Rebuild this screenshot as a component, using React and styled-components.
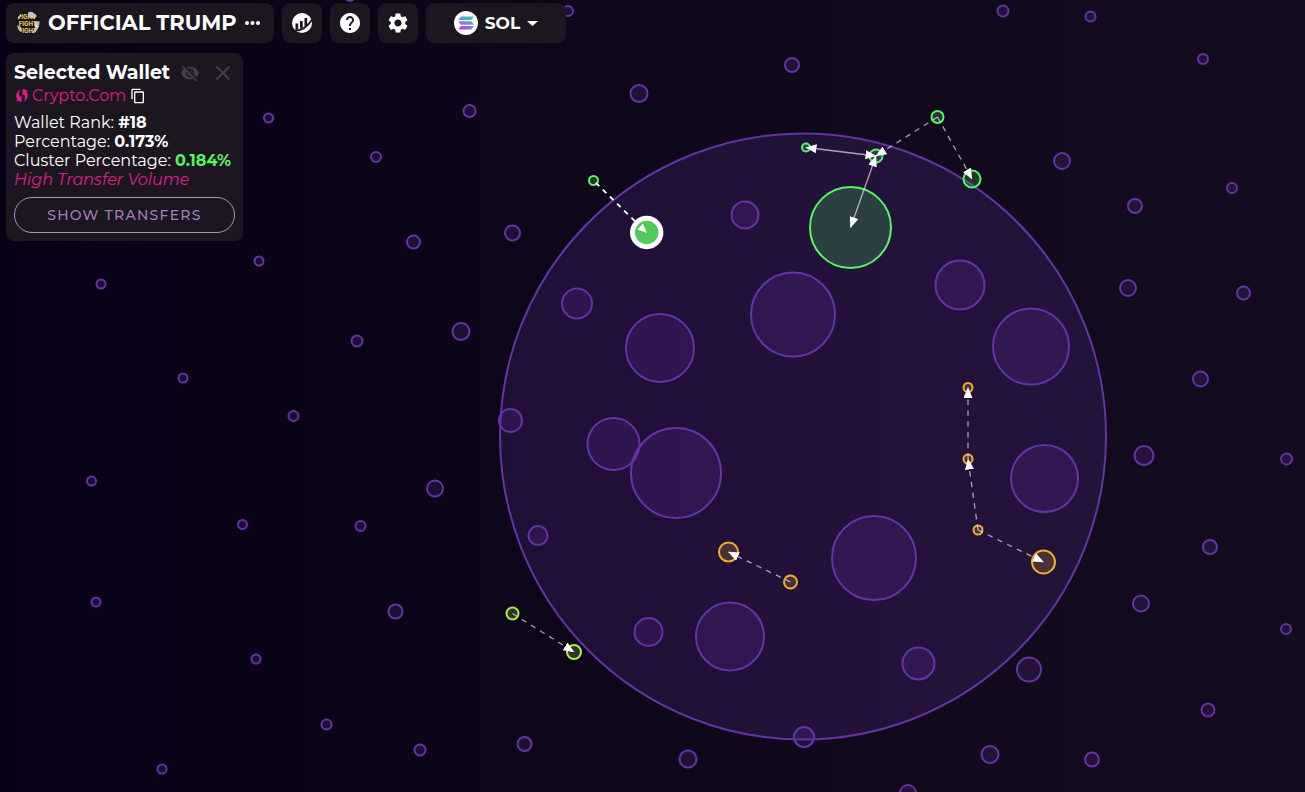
import React from "react";
import styled, { createGlobalStyle } from "styled-components";

const GlobalStyle = createGlobalStyle`
  * { box-sizing: border-box; }
  body {
    margin: 0;
    background: linear-gradient(90deg, #080014 0%, #120a1c 70%, #140b1f 100%);
    color: #fff;
    font-family: Montserrat, Inter, "Open Sans", sans-serif;
    overflow: hidden;
  }
`;

const Page = styled.div`
  position: relative;
  min-height: 100vh;
`;

const BubbleMap = styled.svg`
  position: absolute;
  inset: 0;
  width: 100%;
  height: 100%;
`;

const Overlay = styled.main`
  position: relative;
  display: flex;
  flex-direction: column;
  align-items: flex-start;
  gap: 10px;
  padding: 3px 6px;
`;

const Toolbar = styled.header`
  display: flex;
  gap: 8px;
`;

const ToolButton = styled.button`
  display: flex;
  align-items: center;
  justify-content: ${(p) => (p.$start ? "flex-start" : "center")};
  gap: ${(p) => p.$gap || 0}px;
  height: 40px;
  min-width: ${(p) => p.$width || 40}px;
  padding: 0 ${(p) => (p.$start ? 10 : 0)}px;
  border: 0;
  border-radius: 8px;
  background: #1b161f;
  color: #fff;
  font: inherit;
  cursor: pointer;
`;

const TokenName = styled.span`
  font-size: 21px;
  line-height: 28px;
  font-weight: 700;
`;

const ChainName = styled.span`
  font-size: 17px;
  line-height: 24px;
  font-weight: 700;
`;

const Panel = styled.section`
  width: 237px;
  padding: 8px;
  border-radius: 8px;
  background: #1b161f;
`;

const PanelHead = styled.div`
  display: flex;
  align-items: center;
  gap: 8px;
  height: 24px;
`;

const Title = styled.h1`
  margin: 0;
  font-size: 19px;
  line-height: 24px;
  font-weight: 700;
  white-space: nowrap;
`;

const IconButton = styled.button`
  display: flex;
  align-items: center;
  justify-content: center;
  height: 24px;
  width: 24px;
  margin-left: ${(p) => (p.$end ? "auto" : "0")};
  padding: 0;
  border: 0;
  background: none;
  color: ${(p) => p.$color || "#4a3a50"};
  cursor: pointer;
`;

const WalletRow = styled.div`
  display: flex;
  align-items: center;
  height: 22px;
  margin-bottom: 6px;
`;

const WalletLink = styled.a`
  display: flex;
  align-items: center;
  gap: 2px;
  color: #e01e8c;
  font-size: 16px;
  line-height: 20px;
  text-decoration: none;
`;

const Stat = styled.p`
  margin: 0;
  font-size: 16px;
  line-height: 19px;
  white-space: nowrap;
  color: ${(p) => p.$color || "#fff"};
  font-style: ${(p) => (p.$italic ? "italic" : "normal")};
`;

const Value = styled.strong`
  font-weight: 700;
  color: ${(p) => p.$color || "inherit"};
`;

const TransfersButton = styled.button`
  width: 100%;
  height: 36px;
  margin-top: 8px;
  border: 1px solid #b48cc8;
  border-radius: 18px;
  background: none;
  color: #a47fb8;
  font-family: inherit;
  font-size: 14px;
  font-weight: 500;
  letter-spacing: 0.09em;
  cursor: pointer;
`;

const holders = [
  [803, 436.5, 303], [568, 11, 5], [350, -4, 5], [1003, 11, 5.5], [1090.5, 16.5, 5], [1203, 59, 5],
  [792, 65, 7], [639, 93.5, 8.5], [469.5, 111, 6], [268.5, 118, 4.5], [376, 157, 5], [1062, 161, 8],
  [1232, 188, 5], [1135, 206, 7], [745, 215, 13.5], [512.5, 233, 7.5], [413.5, 242, 6.5],
  [259, 261, 4.5], [101, 284, 4.5], [1128, 288, 8], [1243.5, 293, 6.5], [960, 285, 24.5],
  [577, 303.5, 15], [793, 314.5, 42], [461, 331.5, 8.5], [357, 341, 5.5], [660, 348, 34],
  [1031, 346.5, 38], [183, 378, 4.5], [1200.5, 379, 7.5], [293.5, 416, 5], [510.5, 420.5, 11.5],
  [613.5, 444, 26], [1144, 455.5, 9.5], [1286.5, 459, 5.5], [676, 473, 45], [91.5, 481, 4.5],
  [1044.5, 478.5, 33.5], [435, 488.5, 8], [242.5, 524.5, 4.5], [360.5, 526, 5], [538, 535.5, 9.5],
  [1210, 547, 7], [874, 558, 42], [96, 602, 4.5], [1141, 603.5, 8], [395.5, 611.5, 7],
  [1286, 629, 5], [648.5, 632, 14], [730, 636.5, 34], [256, 659, 4.5], [918.5, 663.5, 16],
  [1029, 669.5, 12], [1208, 710, 6.5], [326.5, 724.5, 5], [804, 737, 10], [524.5, 744, 7],
  [420, 750, 5.5], [688, 759, 8.5], [990, 754.5, 8.5], [1092, 759.5, 7], [162, 769, 4.5],
  [908, 793, 8],
];

const GREEN = "#56f562";
const LIME = "#a8ee4a";
const AMBER = "#edb02c";

const clusterWallets = [
  [850.5, 227.5, 40.5, GREEN], [806, 147.5, 4, GREEN], [876, 156, 6.5, GREEN],
  [937.5, 117, 6, GREEN], [972, 179, 8.5, GREEN], [593.5, 180.5, 4.5, GREEN],
  [512.5, 613.5, 6, LIME], [574, 652, 7, LIME],
  [728.5, 552, 9.5, AMBER], [790.5, 582, 6.5, AMBER],
  [968, 387.5, 4.5, AMBER], [968, 459, 4.5, AMBER], [978, 530, 4.5, AMBER],
  [1043.5, 562, 11.5, AMBER],
];

const transfers = [
  { from: [806, 147.5], to: [876, 156], both: true },
  { from: [876, 156], to: [850.5, 227.5], both: true },
  { from: [937.5, 117], to: [876, 156], dashed: true },
  { from: [937.5, 117], to: [972, 179], dashed: true },
  { from: [512.5, 613.5], to: [574, 652], dashed: true },
  { from: [790.5, 582], to: [728.5, 552], dashed: true },
  { from: [968, 459], to: [968, 387.5], dashed: true },
  { from: [978, 530], to: [968, 459], dashed: true },
  { from: [978, 530], to: [1043.5, 562], dashed: true },
];

function Transfer({ from, to, dashed, both }) {
  return (
    <line
      x1={from[0]} y1={from[1]} x2={to[0]} y2={to[1]}
      stroke="#fff" strokeOpacity="0.62" strokeWidth="1.3"
      strokeDasharray={dashed ? "5.4 5.4" : undefined}
      markerStart={both ? "url(#arrow)" : undefined}
      markerEnd="url(#arrow)"
    />
  );
}

function Bubbles() {
  return (
    <BubbleMap viewBox="0 0 1305 792" preserveAspectRatio="xMidYMid slice" role="img" aria-label="Wallet bubble map">
      <defs>
        <marker id="arrow" viewBox="0 0 11 9" refX="10.5" refY="4.5" markerWidth="11" markerHeight="9" markerUnits="userSpaceOnUse" orient="auto-start-reverse">
          <path d="M0 0 11 4.5 0 9Z" fill="#fff" />
        </marker>
      </defs>
      {holders.map(([x, y, r]) => (
        <circle key={`${x}-${y}`} cx={x} cy={y} r={r} fill="#6432aa" fillOpacity="0.21" stroke="#6433a5" strokeWidth="2" />
      ))}
      {clusterWallets.map(([x, y, r, color]) => (
        <circle key={`${x}-${y}`} cx={x} cy={y} r={r} fill={color} fillOpacity="0.2" stroke={color} strokeWidth="2" />
      ))}
      {transfers.map((t) => <Transfer key={`${t.from}-${t.to}`} {...t} />)}
      <line x1="593.5" y1="180.5" x2="647" y2="233" stroke="#fff" strokeWidth="2" strokeDasharray="5 5" strokeDashoffset="-3" />
      <circle cx="646.7" cy="232.5" r="14.2" fill="#52c95c" stroke="#fff" strokeWidth="5" />
      <path d="M647 233 637.5 229.5 643 223.5Z" fill="#fff" />
    </BubbleMap>
  );
}

function TokenLogo() {
  return (
    <svg width="24" height="24" viewBox="0 0 24 24" aria-hidden="true">
      <defs><clipPath id="coin"><circle cx="12" cy="12" r="11.5" /></clipPath></defs>
      <g clipPath="url(#coin)">
        <rect width="24" height="24" fill="#16140f" />
        <path d="M12 1 18 0 21 5 18 8 13 6ZM18 11l6-1v8l-4 5-4-1 3-5ZM1 14l4 2 1 5-4-1Z" fill="#b9b9b7" />
        <path d="M14 2l3 3M19 13l2 3M2 8l3-4" stroke="#f4f4f0" strokeWidth="1.4" />
        <g fill="#e5c468" fontFamily="Inter, sans-serif" fontWeight="800" fontSize="6" textAnchor="middle">
          <text x="11" y="8">FIGHT</text>
          <text x="12" y="15">FIGHT</text>
          <text x="12" y="22">FIGHT</text>
        </g>
        <path d="M13 2 17 1 18 5 15 7 12 6Z" fill="#c4c4c2" />
      </g>
    </svg>
  );
}

function SolanaLogo() {
  return (
    <svg width="24" height="24" viewBox="0 0 24 24" aria-hidden="true">
      <defs>
        <linearGradient id="sol" gradientUnits="userSpaceOnUse" x1="16" y1="5" x2="9" y2="19">
          <stop offset="0" stopColor="#2fc5b0" /><stop offset="0.5" stopColor="#748fca" /><stop offset="1" stopColor="#c43bf0" />
        </linearGradient>
      </defs>
      <circle cx="12" cy="12" r="12" fill="#fff" />
      <path d="M7 5.5h13l-2.8 3.5H4.2ZM4.2 10.3h13l2.8 3.5H7ZM7 15.1h13l-2.8 3.5H4.2Z" fill="url(#sol)" />
    </svg>
  );
}

export default function App() {
  return (
    <Page>
      <GlobalStyle />
      <Bubbles />
      <Overlay>
        <Toolbar>
          <ToolButton $width={268} $gap={8} $start>
            <TokenLogo />
            <TokenName>OFFICIAL TRUMP</TokenName>
            <svg width="16" height="6" viewBox="1 0 16 6" fill="#fff" aria-hidden="true">
              <circle cx="3" cy="3" r="2" /><circle cx="8.5" cy="3" r="2" /><circle cx="14" cy="3" r="2" />
            </svg>
          </ToolButton>
          <ToolButton aria-label="Market data">
            <svg width="22" height="22" viewBox="0 0 22 22" aria-hidden="true">
              <circle cx="11" cy="11" r="10" fill="#fff" />
              <path d="M4.5 11.5h2.7v6H4.5ZM9 9h2.7v7.5H9ZM13.5 6h2.7v8h-2.7Z" fill="#1b161f" />
              <path d="M2 18.5C10 19.5 17 14 21.5 7" fill="none" stroke="#1b161f" strokeWidth="1.8" />
            </svg>
          </ToolButton>
          <ToolButton aria-label="Help">
            <svg width="24" height="24" viewBox="0 0 24 24" fill="#fff" aria-hidden="true">
              <path d="M12 2C6.48 2 2 6.48 2 12s4.48 10 10 10 10-4.48 10-10S17.52 2 12 2zm1 17h-2v-2h2v2zm2.07-7.75-.9.92C13.45 12.9 13 13.5 13 15h-2v-.5c0-1.1.45-2.1 1.17-2.83l1.24-1.26c.37-.36.59-.86.59-1.41 0-1.1-.9-2-2-2s-2 .9-2 2H8c0-2.21 1.79-4 4-4s4 1.79 4 4c0 .88-.36 1.68-.93 2.25z" />
            </svg>
          </ToolButton>
          <ToolButton aria-label="Settings">
            <svg width="24" height="24" viewBox="0 0 24 24" fill="#fff" aria-hidden="true">
              <path d="M19.14 12.94c.04-.3.06-.61.06-.94 0-.32-.02-.64-.07-.94l2.03-1.58c.18-.14.23-.41.12-.61l-1.92-3.32c-.12-.22-.37-.29-.59-.22l-2.39.96c-.5-.38-1.03-.7-1.62-.94l-.36-2.54c-.04-.24-.24-.41-.48-.41h-3.84c-.24 0-.43.17-.47.41l-.36 2.54c-.59.24-1.13.57-1.62.94l-2.39-.96c-.22-.08-.47 0-.59.22L2.74 8.87c-.12.21-.08.47.12.61l2.03 1.58c-.05.3-.09.63-.09.94s.02.64.07.94l-2.03 1.58c-.18.14-.23.41-.12.61l1.92 3.32c.12.22.37.29.59.22l2.39-.96c.5.38 1.03.7 1.62.94l.36 2.54c.05.24.24.41.48.41h3.84c.24 0 .44-.17.47-.41l.36-2.54c.59-.24 1.13-.56 1.62-.94l2.39.96c.22.08.47 0 .59-.22l1.92-3.32c.12-.22.07-.47-.12-.61l-2.01-1.58zM12 15.6c-1.98 0-3.6-1.62-3.6-3.6s1.62-3.6 3.6-3.6 3.6 1.62 3.6 3.6-1.62 3.6-3.6 3.6z" />
            </svg>
          </ToolButton>
          <ToolButton $width={140} $gap={7}>
            <SolanaLogo />
            <ChainName>SOL</ChainName>
            <svg width="11" height="5" viewBox="0 0 11 5" fill="#fff" aria-hidden="true"><path d="M0 0h11L5.5 5Z" /></svg>
          </ToolButton>
        </Toolbar>

        <Panel>
          <PanelHead>
            <Title>Selected Wallet</Title>
            <IconButton aria-label="Hide wallet">
              <svg width="20" height="20" viewBox="0 0 24 24" fill="currentColor" aria-hidden="true">
                <path d="M12 7c2.76 0 5 2.24 5 5 0 .65-.13 1.26-.36 1.83l2.92 2.92c1.51-1.26 2.7-2.89 3.43-4.75-1.73-4.39-6-7.5-11-7.5-1.4 0-2.74.25-3.98.7l2.16 2.16C10.74 7.13 11.35 7 12 7zM2 4.27l2.28 2.28.46.46C3.08 8.3 1.78 10.02 1 12c1.73 4.39 6 7.5 11 7.5 1.55 0 3.03-.3 4.38-.84l.42.42L19.73 22 21 20.73 3.27 3 2 4.27zM7.53 9.8l1.55 1.55c-.05.21-.08.43-.08.65 0 1.66 1.34 3 3 3 .22 0 .44-.03.65-.08l1.55 1.55c-.67.33-1.41.53-2.2.53-2.76 0-5-2.24-5-5 0-.79.2-1.53.53-2.2zm4.31-.78 3.15 3.15.02-.16c0-1.66-1.34-3-3-3l-.17.01z" />
              </svg>
            </IconButton>
            <IconButton aria-label="Close" $end>
              <svg width="16" height="16" viewBox="0 0 16 16" stroke="currentColor" strokeWidth="2" aria-hidden="true">
                <path d="M1.5 1.5 14.5 14.5M14.5 1.5 1.5 14.5" />
              </svg>
            </IconButton>
          </PanelHead>
          <WalletRow>
            <WalletLink href="#wallet">
              <svg width="16" height="16" viewBox="0 0 16 16" fill="currentColor" aria-hidden="true">
                <path d="M6.5 1.5C4.500 3.500 4.300 6.500 6 9L7.500 7.500V14L2 12.500 3.500 11.300C1 8 2.500 3 6.500 1.500Z" />
                <path d="M9.500 13.500C11.500 11.500 11.700 8.500 10 6L8.500 7.500V1L14 2.500 12.500 3.700C15 7 13.500 12 9.500 13.500Z" />
              </svg>
              Crypto.Com
            </WalletLink>
            <IconButton aria-label="Copy address" $color="#fff">
              <svg width="16" height="16" viewBox="0 0 24 24" fill="currentColor" aria-hidden="true">
                <path d="M16 1H4c-1.1 0-2 .9-2 2v14h2V3h12V1zm3 4H8c-1.1 0-2 .9-2 2v14c0 1.1.9 2 2 2h11c1.1 0 2-.9 2-2V7c0-1.1-.9-2-2-2zm0 16H8V7h11v14z" />
              </svg>
            </IconButton>
          </WalletRow>
          <Stat>Wallet Rank: <Value>#18</Value></Stat>
          <Stat>Percentage: <Value>0.173%</Value></Stat>
          <Stat>Cluster Percentage: <Value $color={GREEN}>0.184%</Value></Stat>
          <Stat $color="#e01e8c" $italic>High Transfer Volume</Stat>
          <TransfersButton>SHOW TRANSFERS</TransfersButton>
        </Panel>
      </Overlay>
    </Page>
  );
}
